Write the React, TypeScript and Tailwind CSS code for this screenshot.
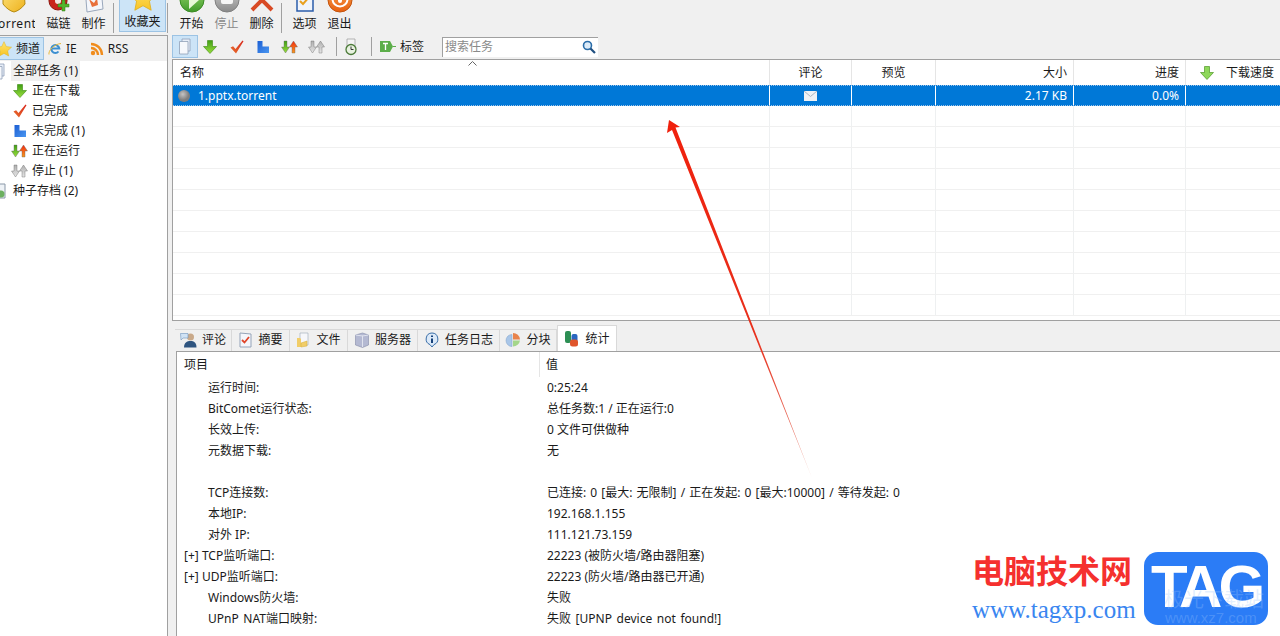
import type { ReactNode } from 'react';

const Down = ({ c = 'url(#greenArrow)', d = '#3c8a10' }: { c?: string; d?: string }) => (
  <svg width="16" height="16" viewBox="0 0 16 16"><path d="M5.5 1.5h5v6h4L8 14.5 1.5 7.5h4z" fill={c} stroke={d} strokeWidth="0.6" /></svg>
);
const Check = () => (
  <svg width="16" height="16" viewBox="0 0 16 16"><path d="M1.5 8.5l2.6-1.2L6.5 10 13.5 1.5l1 .8L7 14.5z" fill="url(#redCheck)" /></svg>
);
const Blue = () => (
  <svg width="16" height="16" viewBox="0 0 16 16"><path d="M2.5 2h5v5.5h6.5V14h-11.500z" fill="url(#blueShape)" /></svg>
);
const UpDown = ({ a = 'url(#greenArrow)', b = 'url(#redArrow)', s = '#666' }: { a?: string; b?: string; s?: string }) => (
  <svg width="17" height="16" viewBox="0 0 17 16">
    <path d="M3 2h3v6h2.500l-4 6-4-6H3z" fill={a} stroke={s} strokeWidth="0.4" />
    <path d="M11 14h3V8h2.500l-4-6-4 6H11z" fill={b} stroke={s} strokeWidth="0.4" />
  </svg>
);
const Doc = ({ cls = '' }: { cls?: string }) => (
  <svg width="16" height="17" viewBox="0 0 16 17" className={cls}>
    <path d="M5 1h8v12H5z" fill="#e8eef8" stroke="#8fa0b8" strokeWidth="0.8" />
    <path d="M2.500 3.500h8.500v12.500H2.500z" fill="#f6f8fc" stroke="#8fa0b8" strokeWidth="0.8" />
  </svg>
);
const Clock = () => (
  <svg width="16" height="18" viewBox="0 0 16 18">
    <path d="M4 1h8v8H4z" fill="#f4f4f4" stroke="#999" strokeWidth="0.7" />
    <circle cx="8" cy="11.500" r="5" fill="#e8f2e0" stroke="#4b7a38" strokeWidth="1.3" />
    <path d="M8 8.500v3h2.500" stroke="#333" strokeWidth="1" fill="none" />
  </svg>
);
const Star = ({ size = 16 }: { size?: number }) => (
  <svg width={size} height={size} viewBox="0 0 24 24"><path d="M12 1l3.400 7.300 7.900 1-5.800 5.400 1.500 7.800-7-3.900-7 3.900 1.500-7.800L.7 9.300l7.900-1z" fill="url(#starFill)" stroke="#dfae1c" strokeWidth="0.7" /></svg>
);
const Ball = ({ c, d, children }: { c: string; d: string; children?: ReactNode }) => (
  <svg width="26" height="26" viewBox="0 0 26 26">
    <circle cx="13" cy="13" r="12" fill={c} stroke={d} strokeWidth="1" />
    {children}
  </svg>
);

function ToolButton({ label, icon, muted, cls = 'w-[35px]', labelCls = '' }: { label: string; icon: ReactNode; muted?: boolean; cls?: string; labelCls?: string }) {
  return (
    <div className={`flex h-[34px] shrink-0 flex-col items-center justify-end overflow-hidden pb-[2px] ${cls}`}>
      <div className="mb-[3px] flex shrink-0 justify-center">{icon}</div>
      <span className={`h-[16px] shrink-0 whitespace-nowrap leading-[16px] ${muted ? 'text-[#8a8a8a]' : ''} ${labelCls}`}>{label}</span>
    </div>
  );
}

const Sep = ({ cls = 'mx-[2px] h-[28px]' }: { cls?: string }) => <div className={`w-px shrink-0 self-center bg-[#a0a0a0] ${cls}`} />;

function TreeRow({ icon, label }: { icon: ReactNode; label: string }) {
  return (
    <div className="flex h-[20px] items-center whitespace-nowrap pl-[7px]">
      <span className="flex w-[25px] justify-center">{icon}</span>
      {label}
    </div>
  );
}

const colBorders = ['w-[597px]', 'w-[82px]', 'w-[84px]', 'w-[138px]', 'w-[112px]'];

function TabItem({ icon, label, w, active }: { icon: ReactNode; label: string; w: string; active?: boolean }) {
  return (
    <div
      className={`flex shrink-0 items-center justify-center gap-[5px] border-r border-[#d9d9d9] ${w} ${
        active ? 'relative z-10 h-[26px] border-x border-t border-[#c8c8c8] bg-white' : 'h-[22px] border-t border-[#d9d9d9] bg-[#f0f0f0] pb-[1px]'
      }`}
    >
      {icon}
      {label}
    </div>
  );
}

const stats: [string, string, string?][] = [
  ['运行时间:', '0:25:24'],
  ['BitComet运行状态:', '总任务数:1 / 正在运行:0'],
  ['长效上传:', '0 文件可供做种'],
  ['元数据下载:', '无'],
  ['', ''],
  ['TCP连接数:', '已连接: 0 [最大: 无限制] / 正在发起: 0 [最大:10000] / 等待发起: 0', '[word-spacing:1px]'],
  ['本地IP:', '192.168.1.155'],
  ['对外 IP:', '111.121.73.159'],
  ['[+] TCP监听端口:', '22223 (被防火墙/路由器阻塞)'],
  ['[+] UDP监听端口:', '22223 (防火墙/路由器已开通)'],
  ['Windows防火墙:', '失败'],
  ['UPnP NAT端口映射:', '失败 [UPNP device not found!]', '[word-spacing:1.5px]'],
];

export default function App() {
  return (
    <div className="relative h-[636px] w-[1280px] overflow-hidden bg-[#f0f0f0] font-['Noto_Sans','Noto_Sans_CJK_SC',sans-serif] text-[12px] text-[#1a1a1a]">
      {/* shared icon gradients */}
      <svg width="0" height="0" className="absolute">
        <defs>
          <linearGradient id="greenArrow" x1="0" y1="0" x2="0" y2="1"><stop offset="0" stopColor="#3f9f14" /><stop offset="1" stopColor="#9ade3e" /></linearGradient>
          <linearGradient id="redArrow" x1="0" y1="0" x2="0" y2="1"><stop offset="0" stopColor="#f02a10" /><stop offset="1" stopColor="#f89a20" /></linearGradient>
          <linearGradient id="redCheck" x1="0" y1="1" x2="1" y2="0"><stop offset="0" stopColor="#e8702c" /><stop offset="1" stopColor="#d8261c" /></linearGradient>
          <linearGradient id="blueShape" x1="0" y1="0" x2="1" y2="1"><stop offset="0" stopColor="#1c5fd4" /><stop offset="1" stopColor="#4a96f0" /></linearGradient>
          <linearGradient id="grayArrow" x1="0" y1="0" x2="0" y2="1"><stop offset="0" stopColor="#b0b0b0" /><stop offset="1" stopColor="#e6e6e6" /></linearGradient>
          <linearGradient id="starFill" x1="0" y1="0" x2="0" y2="1"><stop offset="0" stopColor="#ffe56e" /><stop offset="1" stopColor="#f8c425" /></linearGradient>
          <linearGradient id="greenBall" x1="0" y1="0" x2="0" y2="1"><stop offset="0" stopColor="#9bd86e" /><stop offset="1" stopColor="#3f9a2a" /></linearGradient>
          <linearGradient id="grayBall" x1="0" y1="0" x2="0" y2="1"><stop offset="0" stopColor="#d0d0d0" /><stop offset="1" stopColor="#8a8a8a" /></linearGradient>
          <linearGradient id="orangeBall" x1="0" y1="0" x2="0" y2="1"><stop offset="0" stopColor="#f8a050" /><stop offset="1" stopColor="#e8600f" /></linearGradient>
          <linearGradient id="yellowBag" x1="0" y1="0" x2="1" y2="1"><stop offset="0" stopColor="#fde27a" /><stop offset="1" stopColor="#eeb11c" /></linearGradient>
          <radialGradient id="ball" cx="40%" cy="35%"><stop offset="0" stopColor="#c4c4c4" /><stop offset="1" stopColor="#7e7e7e" /></radialGradient>
        </defs>
      </svg>

      {/* top toolbar */}
      <div className="-ml-[7px] flex h-[34px] items-start">
        <ToolButton cls="w-[42px] mr-[6px]" labelCls="tracking-[0.5px]" label="Torrent" icon={<svg width="26" height="26" viewBox="0 0 26 26"><path d="M2 2h21l1 15c-3 4-7 7-11 8-4-1-8-4-11-8z" fill="url(#yellowBag)" stroke="#b58a10" /></svg>} />
        <ToolButton label="磁链" icon={<svg width="26" height="26" viewBox="0 0 26 26"><path d="M3 2h18v12a9 9 0 0 1-18 0z" fill="#c9251a" stroke="#8e1610" /><path d="M9 2h6v12a3 3 0 0 1-6 0z" fill="#f0e6e0" /><path d="M16 13h3v4h4v3h-4v4h-3v-4h-4v-3h4z" fill="#54b52c" stroke="#2f7d16" strokeWidth="0.5" /></svg>} />
        <ToolButton label="制作" icon={<svg width="24" height="26" viewBox="0 0 24 26"><path d="M3 0h16l2 22-16 3z" fill="#f4f6fb" stroke="#9aa7bb" /><path d="M7 12l5 4 3-5 1 7-6 2z" fill="#e8703c" /></svg>} />
        <Sep cls="ml-[2px] mr-[5px] h-[30px] mt-[1px]" />
        <div className="flex h-[32px] w-[47px] shrink-0 flex-col items-center justify-end overflow-hidden border-x border-b border-[#9cc3e4] bg-[#cce4f7] pb-[1px]">
          <div className="mb-[2px] shrink-0"><Star size={28} /></div>
          <span className="h-[16px] shrink-0 leading-[16px]">收藏夹</span>
        </div>
        <Sep cls="ml-[1px] mr-[6px] h-[30px] mt-[1px]" />
        <ToolButton label="开始" icon={<Ball c="url(#greenBall)" d="#3c8a25"><path d="M10 4l10 9-10 9z" fill="#e8f8d8" /></Ball>} />
        <ToolButton muted label="停止" icon={<Ball c="url(#grayBall)" d="#808080"><rect x="7" y="5" width="12" height="12" rx="2" fill="#f6f6f6" /></Ball>} />
        <ToolButton label="删除" icon={<svg width="26" height="26" viewBox="0 0 26 26"><path d="M3 3l20 20M23 3L3 23" stroke="#d84a24" strokeWidth="4" fill="none" /></svg>} />
        <Sep cls="ml-[2px] mr-[5px] h-[30px] mt-[1px]" />
        <ToolButton label="选项" icon={<svg width="24" height="26" viewBox="0 0 24 26"><path d="M4 0h16v24H4z" fill="#f0f4fb" stroke="#2a5cab" strokeWidth="1.500" /><path d="M7 14l3 3 7-8" stroke="#e8a020" strokeWidth="2" fill="none" /></svg>} />
        <ToolButton label="退出" icon={<Ball c="url(#orangeBall)" d="#c2540e"><circle cx="13" cy="12" r="7.500" fill="none" stroke="#fff" strokeWidth="2" /><path d="M13 2v12" stroke="#fff" strokeWidth="4" strokeLinecap="round" /></Ball>} />
      </div>

      <div className="flex h-[602px]">
        {/* left panel */}
        <div className="mt-[1px] flex w-[168px] shrink-0 flex-col overflow-hidden border-r border-t border-[#a0a0a0]">
          <div className="flex h-[25px] shrink-0 items-center">
            <div className="-ml-[6px] flex h-[23px] w-[50px] items-center gap-[4px] border border-[#9cc3e4] bg-[#cce4f7] pl-[1px]">
              <Star size={16} />频道
            </div>
            <span className="ml-[4px] flex items-center gap-[4px]">
              <svg width="14" height="14" viewBox="0 0 14 14"><path d="M10.500 9.500a4 4 0 1 1 .8-3H4" fill="#eaf3fb" stroke="#3d8fd0" strokeWidth="2" /><path d="M1 12.500C0 9 6 2 13 1.500" stroke="#e8b83a" fill="none" /></svg>
              IE
            </span>
            <span className="ml-[13px] flex items-center gap-[4px]">
              <svg width="14" height="14" viewBox="0 0 14 14"><circle cx="3" cy="11" r="2.200" fill="#f08c1c" /><path d="M1 6a7 7 0 0 1 7 7M1 2a11 11 0 0 1 11 11" stroke="#f08c1c" strokeWidth="2.400" fill="none" /></svg>
              RSS
            </span>
          </div>
          <div className="flex-1 bg-white">
            <div className="flex h-[20px] items-center">
              <Doc cls="-ml-[9px] mr-[4px]" />
              <span className="bg-[#f0f0f0] px-[2px] leading-[20px]">全部任务 (1)</span>
            </div>
            <TreeRow icon={<Down />} label="正在下载" />
            <TreeRow icon={<Check />} label="已完成" />
            <TreeRow icon={<Blue />} label="未完成 (1)" />
            <TreeRow icon={<UpDown />} label="正在运行" />
            <TreeRow icon={<UpDown a="url(#grayArrow)" b="url(#grayArrow)" />} label="停止 (1)" />
            <div className="flex h-[20px] items-center">
              <svg width="14" height="16" viewBox="0 0 14 16" className="-ml-[7px] mr-[6px]"><path d="M1 1h11v14H1z" fill="#eef2f6" stroke="#8a98a8" /><circle cx="8" cy="11" r="3.500" fill="#6cb060" /></svg>
              种子存档 (2)
            </div>
          </div>
        </div>

        {/* right side */}
        <div className="flex min-w-0 flex-1 flex-col">
          <div className="flex h-[25px] shrink-0 items-center pl-[4px]">
            <div className="flex h-[23px] w-[26px] items-center justify-center border border-[#9cc3e4] bg-[#cce4f7]"><Doc /></div>
            <div className="-ml-[2px] flex items-center">
              <span className="flex w-[27px] justify-center"><Down /></span>
              <span className="flex w-[27px] justify-center"><Check /></span>
              <span className="flex w-[26px] justify-center"><Blue /></span>
              <span className="flex w-[27px] justify-center"><UpDown /></span>
              <span className="flex w-[27px] justify-center"><UpDown a="url(#grayArrow)" b="url(#grayArrow)" /></span>
            </div>
            <Sep cls="ml-[6px] mr-[6px] h-[19px]" />
            <Clock />
            <Sep cls="ml-[12px] mr-[8px] h-[19px]" />
            <svg width="16" height="11" viewBox="0 0 16 11"><path d="M0 0h10l3 5.500L10 11H0z" fill="#5cae4a" /><path d="M3 2.500h5M5.500 2.500V9" stroke="#fff" strokeWidth="1.300" /><path d="M13 5.500h3" stroke="#5cae4a" /></svg>
            <span className="ml-[4px] w-[42px]">标签</span>
            <div className="flex h-[20px] w-[156px] items-center justify-between border-l border-t border-[#a0a0a0] bg-white px-[2px] text-[#8a8a8a]">
              搜索任务
              <svg width="14" height="14" viewBox="0 0 14 14"><circle cx="5.500" cy="5.500" r="4" fill="#dcebf8" stroke="#2a6ca8" strokeWidth="1.600" /><path d="M8.500 8.500L13 13" stroke="#1f4f80" strokeWidth="2.200" /></svg>
            </div>
          </div>

          {/* task table */}
          <div className="relative ml-[4px] flex h-[262px] shrink-0 flex-col overflow-hidden border-b border-l border-t border-[#a0a0a0] bg-white">
            <div className="flex h-[25px] shrink-0">
              <div className="relative w-[597px] shrink-0 border-r border-[#e5e5e5] pl-[7px] leading-[26px]">
                名称
                <svg width="9" height="5" viewBox="0 0 9 5" className="absolute left-[295px] top-[1px]"><path d="M.5 4.500l4-4 4 4" fill="none" stroke="#666" /></svg>
              </div>
              <div className="w-[82px] shrink-0 border-r border-[#e5e5e5] text-center leading-[26px]">评论</div>
              <div className="w-[84px] shrink-0 border-r border-[#e5e5e5] text-center leading-[26px]">预览</div>
              <div className="w-[138px] shrink-0 border-r border-[#e5e5e5] pr-[6px] text-right leading-[26px]">大小</div>
              <div className="w-[112px] shrink-0 border-r border-[#e5e5e5] pr-[6px] text-right leading-[26px]">进度</div>
              <div className="flex flex-1 items-center justify-between pl-[13px] pr-[6px]"><Down c="#8ed85a" /><span>下载速度</span></div>
            </div>
            <div className="flex h-[21px] shrink-0 border-y border-dotted border-[#9fc4e8] bg-[#0078d7] text-white">
              <div className="flex w-[597px] shrink-0 items-center border-r border-white pl-[4px]">
                <svg width="14" height="14" viewBox="0 0 14 14"><circle cx="7" cy="7" r="6" fill="url(#ball)" /></svg>
                <span className="ml-[7px]">1.pptx.torrent</span>
              </div>
              <div className="flex w-[82px] shrink-0 items-center justify-center border-r border-white">
                <svg width="13" height="10" viewBox="0 0 13 10"><rect width="13" height="10" fill="#eef1f5" /><path d="M0 0l6.500 5.500L13 0" fill="none" stroke="#aab4c0" /></svg>
              </div>
              <div className="w-[84px] shrink-0 border-r border-white" />
              <div className="w-[138px] shrink-0 border-r border-white pr-[6px] text-right leading-[19px]">2.17 KB</div>
              <div className="w-[112px] shrink-0 border-r border-white pr-[6px] text-right leading-[19px]">0.0%</div>
            </div>
            {Array.from({ length: 10 }).map((_, i) => (
              <div key={i} className="flex h-[21px] shrink-0 border-b border-[#f0f0f0]">
                {colBorders.map((w) => (
                  <div key={w} className={`shrink-0 border-r border-[#eef0f1] ${w}`} />
                ))}
              </div>
            ))}
          </div>

          {/* detail tabs */}
          <div className="ml-[7px] mt-[4px] flex h-[26px] shrink-0 items-end">
            <TabItem w="w-[57px]" label="评论" icon={<svg width="17" height="16" viewBox="0 0 17 16"><circle cx="10.500" cy="5" r="3.500" fill="#c9a98a" /><path d="M4 15.500c0-5 3-6.500 6.500-6.500s6 1.500 6 6.500z" fill="#2f5580" /><path d="M.5 1.500h7.500v4.500H3L1 8z" fill="#cfe2f5" stroke="#6d94bd" strokeWidth="0.6" /></svg>} />
            <TabItem w="w-[58px]" label="摘要" icon={<svg width="15" height="16" viewBox="0 0 15 16"><path d="M2 1l11 1v13H2z" fill="#f4f6fb" stroke="#94a3b8" /><path d="M4 8l2.500 2.500L11 5" stroke="#e0452a" strokeWidth="1.800" fill="none" /></svg>} />
            <TabItem w="w-[58px]" label="文件" icon={<svg width="15" height="16" viewBox="0 0 15 16"><path d="M4 1h8v12H4z" fill="#f6f7fa" stroke="#9aa7b5" strokeWidth="0.6" /><path d="M1 6h3l1 1v8H1z" fill="#f1cd68" /><path d="M5 15l6-1V9l-6 2z" fill="#f1cd68" stroke="#d4ac38" strokeWidth="0.5" /></svg>} />
            <TabItem w="w-[70px]" label="服务器" icon={<svg width="16" height="16" viewBox="0 0 16 16"><path d="M1.500 3l7-2 6 2v10l-6 2.500-7-2.500z" fill="#b4b9d2" stroke="#858ca8" strokeWidth="0.6" /><path d="M8.500 3.500V15" stroke="#e0e3ee" /><path d="M1.500 3l7 1 6-1" stroke="#e0e3ee" fill="none" /></svg>} />
            <TabItem w="w-[82px]" label="任务日志" icon={<svg width="16" height="16" viewBox="0 0 16 16"><path d="M8 1a6 6 0 0 1 2 11.600L8 15l-2-2.400A6 6 0 0 1 8 1z" fill="#dbe9f8" stroke="#3a6ea8" /><path d="M8 3.500v1.500M8 6.500v4.500" stroke="#17427a" strokeWidth="2" /></svg>} />
            <TabItem w="w-[57px]" label="分块" icon={<svg width="16" height="16" viewBox="0 0 16 16"><path d="M7 2.500a6 6 0 1 0 0 12z" fill="#a9c6e8" stroke="#7fa0c8" strokeWidth="0.5" /><path d="M8 1a7 7 0 0 1 7 6.500H8z" fill="#e8834c" /><path d="M8 8.500h7a7 7 0 0 1-7 6z" fill="#a4d68a" /></svg>} />
            <TabItem active w="w-[60px]" label="统计" icon={<svg width="16" height="17" viewBox="0 0 16 17"><rect x="1" y="1" width="6" height="12" rx="2" fill="#2d8f54" /><rect x="7.500" y="4" width="6" height="9" rx="2" fill="#2a66c0" /><rect x="6" y="9.500" width="8" height="7" rx="2.500" fill="#e0552c" /></svg>} />
          </div>

          {/* stats list */}
          <div className="ml-[8px] min-h-0 flex-1 overflow-hidden border-l border-t border-[#a0a0a0] bg-white">
            <div className="flex h-[25px] items-center">
              <div className="w-[363px] shrink-0 border-r border-[#e5e5e5] pl-[7px] leading-[25px]">项目</div>
              <div className="pl-[6px]">值</div>
            </div>
            {stats.map(([k, v, spacing], i) => (
              <div key={i} className={`flex h-[21px] items-center whitespace-nowrap ${spacing ?? ''}`}>
                <div className={`w-[364px] shrink-0 ${k.startsWith('[+]') ? 'pl-[7px]' : 'pl-[31px]'}`}>{k}</div>
                <div className="pl-[6px]">{v}</div>
              </div>
            ))}
          </div>
        </div>
      </div>

      {/* red arrow annotation */}
      <svg width="1280" height="636" viewBox="0 0 1280 636" className="pointer-events-none absolute left-0 top-0">
        <defs>
          <linearGradient id="arrow" gradientUnits="userSpaceOnUse" x1="669" y1="120" x2="812" y2="478">
            <stop offset="0" stopColor="#f0200c" />
            <stop offset="0.6" stopColor="#e8301c" />
            <stop offset="0.85" stopColor="#e87060" />
            <stop offset="1" stopColor="#f2c8c0" />
          </linearGradient>
        </defs>
        <path d="M669 120L680 127 675.500 127.500 812 478 672 130 667 133z" fill="url(#arrow)" />
      </svg>

      {/* site watermark */}
      <div className="pointer-events-none absolute left-[972px] top-[552px] flex">
        <div className="w-[172px]">
          <div className="-mt-[1px] whitespace-nowrap text-[32px] font-bold leading-[40px] text-[#f5302e]">电脑技术网</div>
          <div className="mt-[6px] whitespace-nowrap font-['Liberation_Serif',serif] text-[25px] leading-[26px] text-[#3a86f0]">www.tagxp.com</div>
        </div>
        <div className="relative flex h-[73px] w-[124px] items-center justify-center overflow-hidden rounded-[14px] bg-[#2b7cf6] font-['Liberation_Sans',sans-serif] text-[60px] font-bold tracking-[-4px] text-white">
          <span className="-mt-[4px]">TAG</span>
          <span className="absolute left-[20px] top-[35px] font-['Noto_Sans_CJK_SC',sans-serif] text-[20px] font-normal leading-[24px] tracking-normal text-[#9cc4fb]/30">极光下载站</span>
          <span className="absolute left-[21px] top-[58px] text-[15px] font-normal leading-[16px] tracking-normal text-[#9cc4fb]/30">www.xz7.com</span>
        </div>
      </div>
    </div>
  );
}
